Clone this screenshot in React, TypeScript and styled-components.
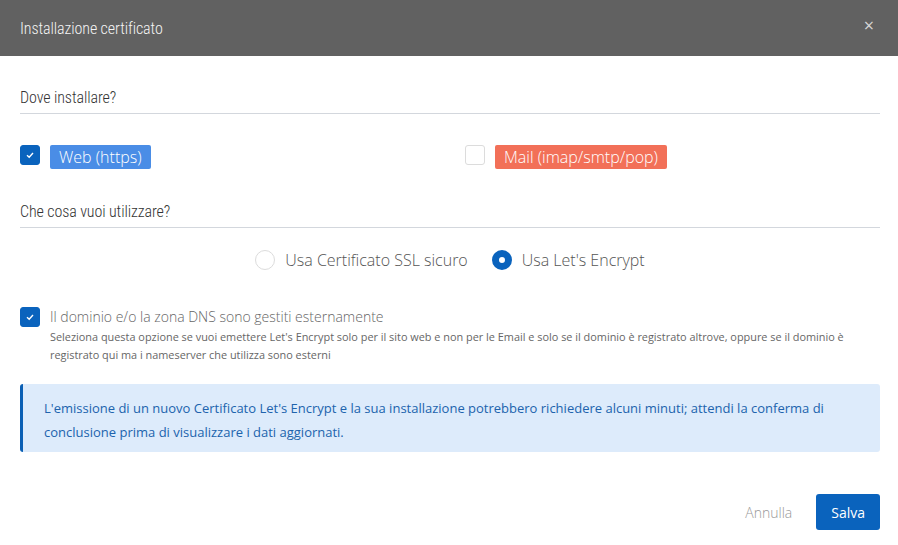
import styled, { createGlobalStyle } from "styled-components";

const GlobalStyle = createGlobalStyle`
  html, body {
    margin: 0;
    padding: 0;
    background: #ffffff;
  }
  body {
    font-family: "Open Sans", "Liberation Sans", sans-serif;
  }
  * {
    box-sizing: border-box;
  }
`;

const condensed = `"Roboto", "Liberation Sans", sans-serif`;

const Modal = styled.div`
  width: 898px;
  height: 545px;
  display: flex;
  flex-direction: column;
  background: #ffffff;
`;

const Header = styled.header`
  height: 56px;
  background-color: #616161;
  display: flex;
  align-items: center;
  justify-content: space-between;
  padding: 0 24px 0 20px;
`;

const Title = styled.h1`
  margin: 0;
  font-family: ${condensed};
  font-stretch: 75%;
  font-variation-settings: "wdth" 75;
  font-weight: 350;
  font-size: 16px;
  letter-spacing: -0.1px;
  color: #f4f4f4;
`;

const Close = styled.button`
  border: 0;
  background: none;
  padding: 0;
  color: #d6d6d6;
  font-size: 18px;
  line-height: 1;
  margin-top: -6px;
  cursor: pointer;
  font-family: "Open Sans", sans-serif;
  font-weight: 400;
`;

const Body = styled.div`
  padding: 32px 18px 0 20px;
  display: flex;
  flex-direction: column;
`;

const SectionTitle = styled.h2`
  margin: 0;
  font-family: ${condensed};
  font-stretch: 75%;
  font-variation-settings: "wdth" 75;
  font-weight: 350;
  font-size: 16px;
  letter-spacing: -0.1px;
  color: #333333;
  padding-bottom: 6px;
  border-bottom: 1px solid #d3d7dd;
`;

const TwoCols = styled.div`
  display: grid;
  grid-template-columns: 1fr 1fr;
  column-gap: 30px;
  margin: 31px 0 33px;
`;

const CheckRow = styled.label`
  display: flex;
  align-items: flex-start;
  gap: 10px;
`;

const Box = styled.span<{ $checked?: boolean }>`
  width: 20px;
  height: 20px;
  flex: none;
  border-radius: 3px;
  border: 1px solid ${(p) => (p.$checked ? "#0a63bd" : "#dcdcdc")};
  background: ${(p) => (p.$checked ? "#0a63bd" : "#ffffff")};
  display: flex;
  align-items: center;
  justify-content: center;
`;

const Badge = styled.span<{ $color: string }>`
  display: inline-block;
  background: ${(p) => p.$color};
  color: #ffffff;
  font-weight: 300;
  font-size: 16px;
  line-height: 24px;
  padding: 0 9px;
  border-radius: 2px;
`;

const RadioRow = styled.div`
  display: flex;
  justify-content: center;
  gap: 24px;
  margin: 21px 0 36px;
`;

const RadioOption = styled.label`
  display: flex;
  align-items: center;
  gap: 10px;
  font-weight: 300;
  font-size: 16px;
  color: #555555;
`;

const RadioDot = styled.span<{ $checked?: boolean }>`
  width: 20px;
  height: 20px;
  border-radius: 50%;
  flex: none;
  border: ${(p) => (p.$checked ? "7px solid #0a63bd" : "1px solid #dcdcdc")};
  background: #ffffff;
`;

const External = styled.div`
  display: flex;
  flex-direction: column;
`;

const ExternalLabel = styled.span`
  font-weight: 300;
  font-size: 14px;
  line-height: 20px;
  color: #666666;
`;

const Hint = styled.p`
  margin: 1px 0 0;
  font-size: 10.9px;
  line-height: 18px;
  color: #666666;
  font-weight: 400;
`;

const Info = styled.div`
  margin-top: 20px;
  background: #ddebfb;
  border-left: 3px solid #0a5fb4;
  border-radius: 3px;
  padding: 12px 20px 8px 21px;
  color: #2063ad;
  font-size: 13px;
  line-height: 24px;
`;

const Footer = styled.footer`
  margin-top: auto;
  display: flex;
  justify-content: flex-end;
  align-items: center;
  gap: 24px;
  padding: 0 18px 15px 20px;
`;

const GhostButton = styled.button`
  border: 0;
  background: none;
  font-family: "Open Sans", sans-serif;
  font-weight: 300;
  font-size: 14px;
  color: #999999;
  padding: 0;
`;

const PrimaryButton = styled.button`
  border: 0;
  border-radius: 3px;
  background: #0a63bd;
  color: #ffffff;
  font-family: "Open Sans", sans-serif;
  font-weight: 400;
  font-size: 14px;
  height: 36px;
  padding: 0 15px;
`;

function Check() {
  return (
    <svg width="10" height="10" viewBox="0 0 10 10">
      <path d="M2 5.2 L4.2 7.2 L8 3" fill="none" stroke="#ffffff" strokeWidth="1.4" />
    </svg>
  );
}

export default function App() {
  return (
    <>
      <GlobalStyle />
      <Modal>
        <Header>
          <Title>Installazione certificato</Title>
          <Close>×</Close>
        </Header>
        <Body>
          <SectionTitle>Dove installare?</SectionTitle>
          <TwoCols>
            <CheckRow>
              <Box $checked>
                <Check />
              </Box>
              <Badge $color="#4a8de6">Web (https)</Badge>
            </CheckRow>
            <CheckRow>
              <Box />
              <Badge $color="#f27058">Mail (imap/smtp/pop)</Badge>
            </CheckRow>
          </TwoCols>
          <SectionTitle>Che cosa vuoi utilizzare?</SectionTitle>
          <RadioRow>
            <RadioOption>
              <RadioDot />
              Usa Certificato SSL sicuro
            </RadioOption>
            <RadioOption>
              <RadioDot $checked />
              Usa Let's Encrypt
            </RadioOption>
          </RadioRow>
          <CheckRow>
            <Box $checked>
              <Check />
            </Box>
            <External>
              <ExternalLabel>Il dominio e/o la zona DNS sono gestiti esternamente</ExternalLabel>
              <Hint>
                Seleziona questa opzione se vuoi emettere Let's Encrypt solo per il sito web e non per le Email e solo se il dominio è registrato altrove, oppure se il dominio è registrato qui ma i nameserver che utilizza sono esterni
              </Hint>
            </External>
          </CheckRow>
          <Info>
            L'emissione di un nuovo Certificato Let's Encrypt e la sua installazione potrebbero richiedere alcuni minuti; attendi la conferma di conclusione prima di visualizzare i dati aggiornati.
          </Info>
        </Body>
        <Footer>
          <GhostButton>Annulla</GhostButton>
          <PrimaryButton>Salva</PrimaryButton>
        </Footer>
      </Modal>
    </>
  );
}
